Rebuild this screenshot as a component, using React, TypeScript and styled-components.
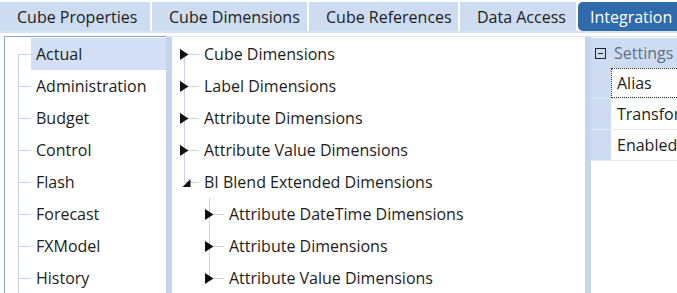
import React from "react";
import styled, { createGlobalStyle } from "styled-components";

const GlobalStyle = createGlobalStyle`
  html, body {
    margin: 0;
    padding: 0;
    background: #ffffff;
    overflow: hidden;
  }
  body {
    font-family: "Open Sans", "Noto Sans", sans-serif;
    color: #1c1c1c;
  }
`;

const LINE = "#c5d3ea";
const BAR = "#c6d5ee";

const Page = styled.div`
  width: 677px;
  height: 293px;
  display: flex;
  flex-direction: column;
  overflow: hidden;
`;

const TabBar = styled.div`
  display: flex;
  gap: 2px;
  padding-top: 2px;
  height: 29px;
  border-bottom: 2px solid #d7e2f3;
`;

const Tab = styled.div<{ active?: boolean; width: number }>`
  flex: 0 0 ${({ width }) => width}px;
  display: flex;
  align-items: center;
  padding-left: ${({ active }) => (active ? 12 : 17)}px;
  box-sizing: border-box;
  font-size: 16px;
  white-space: nowrap;
  background: ${({ active }) => (active ? "#2f6bab" : "#cddcf1")};
  color: ${({ active }) => (active ? "#ffffff" : "#1c1c1c")};
  border-radius: ${({ active }) => (active ? "5px 0 0 5px" : "0")};
`;

const Body = styled.div`
  flex: 1;
  display: flex;
  margin-top: 3px;
  margin-left: 4px;
  border-top: 1px solid #dfe6f2;
  min-height: 0;
`;

const LeftPanel = styled.div`
  flex: 0 0 161px;
  border-left: 1px solid #8aa5d3;
  border-top: 1px solid #8aa5d3;
  margin-top: -1px;
  padding-top: 1px;
  display: flex;
  flex-direction: column;
`;

const Splitter = styled.div`
  flex: 0 0 6px;
  background: ${BAR};
`;

const MiddlePanel = styled.div`
  flex: 0 0 413px;
  display: flex;
  flex-direction: column;
  padding-top: 1px;
`;

const RightPanel = styled.div`
  flex: 1;
  display: flex;
  flex-direction: column;
  padding-top: 1px;
  min-width: 0;
`;

const Row = styled.div<{ indent?: number }>`
  height: 32px;
  display: flex;
  align-items: center;
  padding-left: ${({ indent = 0 }) => indent}px;
  font-size: 16px;
  white-space: nowrap;
`;

const ListLabel = styled.span<{ selected?: boolean }>`
  flex: 1;
  align-self: stretch;
  display: flex;
  align-items: center;
  padding-left: 5px;
  background: ${({ selected }) => (selected ? "#d2dff5" : "transparent")};
`;

const Label = styled.span`
  padding-left: 0;
`;

const Connector = styled.svg`
  flex: 0 0 auto;
  display: block;
`;

type Part = "first" | "mid" | "last" | "only";

const LeftBranch: React.FC<{ part: Part }> = ({ part }) => (
  <Connector width={26} height={32} viewBox="0 0 26 32">
    <line
      x1={13.5}
      x2={13.5}
      y1={part === "first" ? 16 : 0}
      y2={32}
      stroke={LINE}
      strokeWidth={1}
    />
    <line x1={13} x2={26} y1={16.5} y2={16.5} stroke={LINE} strokeWidth={1} />
  </Connector>
);

const TreeBranch: React.FC<{
  part: Part;
  expanded?: boolean;
  topLine?: boolean;
}> = ({ part, expanded, topLine }) => {
  const top = part === "first" && !topLine ? 16 : 0;
  const bottom = part === "last" || part === "only" ? 16 : 32;
  return (
    <Connector width={32} height={32} viewBox="0 0 32 32">
      <line x1={12.5} x2={12.5} y1={top} y2={bottom} stroke={LINE} strokeWidth={1} />
      <line x1={13} x2={27} y1={16.5} y2={16.5} stroke={LINE} strokeWidth={1} />
      {expanded ? (
        <polygon points="10.5,21 18.5,13 18.5,21" fill="#111" />
      ) : (
        <polygon points="8,11 16.5,16.5 8,22" fill="#111" />
      )}
    </Connector>
  );
};

const SettingsHeader = styled.div`
  height: 30px;
  display: flex;
  align-items: center;
  background: #cddcf1;
  padding-left: 4px;
  gap: 8px;
  font-size: 16px;
  color: #5d7088;
  white-space: nowrap;
`;

const CollapseBox = styled.span`
  width: 9px;
  height: 9px;
  border: 1px solid #222;
  display: flex;
  align-items: center;
  justify-content: center;
  &::after {
    content: "";
    width: 5px;
    height: 1px;
    background: #222;
  }
`;

const PropRow = styled.div`
  height: 30px;
  display: flex;
  border-bottom: 1px solid #e4eaf4;
  background: #cddcf1;
`;

const PropName = styled.div<{ focused?: boolean }>`
  margin-left: 20px;
  flex: 1;
  display: flex;
  align-items: center;
  padding-left: 5px;
  background: #ffffff;
  font-size: 16px;
  white-space: nowrap;
  overflow: hidden;
  box-sizing: border-box;
  border: 1px dotted ${({ focused }) => (focused ? "#333" : "transparent")};
  border-right: none;
`;

const cubes = [
  "Actual",
  "Administration",
  "Budget",
  "Control",
  "Flash",
  "Forecast",
  "FXModel",
  "History",
];

const tabs = [
  { label: "Cube Properties", width: 150 },
  { label: "Cube Dimensions", width: 155 },
  { label: "Cube References", width: 149 },
  { label: "Data Access", width: 116 },
  { label: "Integration", width: 110, active: true },
];

const topNodes = [
  "Cube Dimensions",
  "Label Dimensions",
  "Attribute Dimensions",
  "Attribute Value Dimensions",
];

const blendChildren = [
  "Attribute DateTime Dimensions",
  "Attribute Dimensions",
  "Attribute Value Dimensions",
];

const props = ["Alias", "Transformation", "Enabled"];

export default function App() {
  return (
    <Page>
      <GlobalStyle />
      <TabBar>
        {tabs.map((t) => (
          <Tab key={t.label} width={t.width} active={t.active}>
            {t.label}
          </Tab>
        ))}
      </TabBar>
      <Body>
        <LeftPanel>
          {cubes.map((c, i) => (
            <Row key={c}>
              <LeftBranch part={i === 0 ? "first" : "mid"} />
              <ListLabel selected={i === 0}>{c}</ListLabel>
            </Row>
          ))}
        </LeftPanel>
        <Splitter />
        <MiddlePanel>
          {topNodes.map((n, i) => (
            <Row key={n} indent={0}>
              <TreeBranch part={i === 0 ? "first" : "mid"} />
              <Label>{n}</Label>
            </Row>
          ))}
          <Row>
            <TreeBranch part="last" expanded />
            <Label>BI Blend Extended Dimensions</Label>
          </Row>
          {blendChildren.map((n, i) => (
            <Row key={n} indent={25}>
              <TreeBranch
                part={i === blendChildren.length - 1 ? "last" : i === 0 ? "first" : "mid"}
                topLine
              />
              <Label>{n}</Label>
            </Row>
          ))}
        </MiddlePanel>
        <Splitter />
        <RightPanel>
          <SettingsHeader>
            <CollapseBox />
            Settings
          </SettingsHeader>
          {props.map((p, i) => (
            <PropRow key={p}>
              <PropName focused={i === 0}>{p}</PropName>
            </PropRow>
          ))}
        </RightPanel>
      </Body>
    </Page>
  );
}
